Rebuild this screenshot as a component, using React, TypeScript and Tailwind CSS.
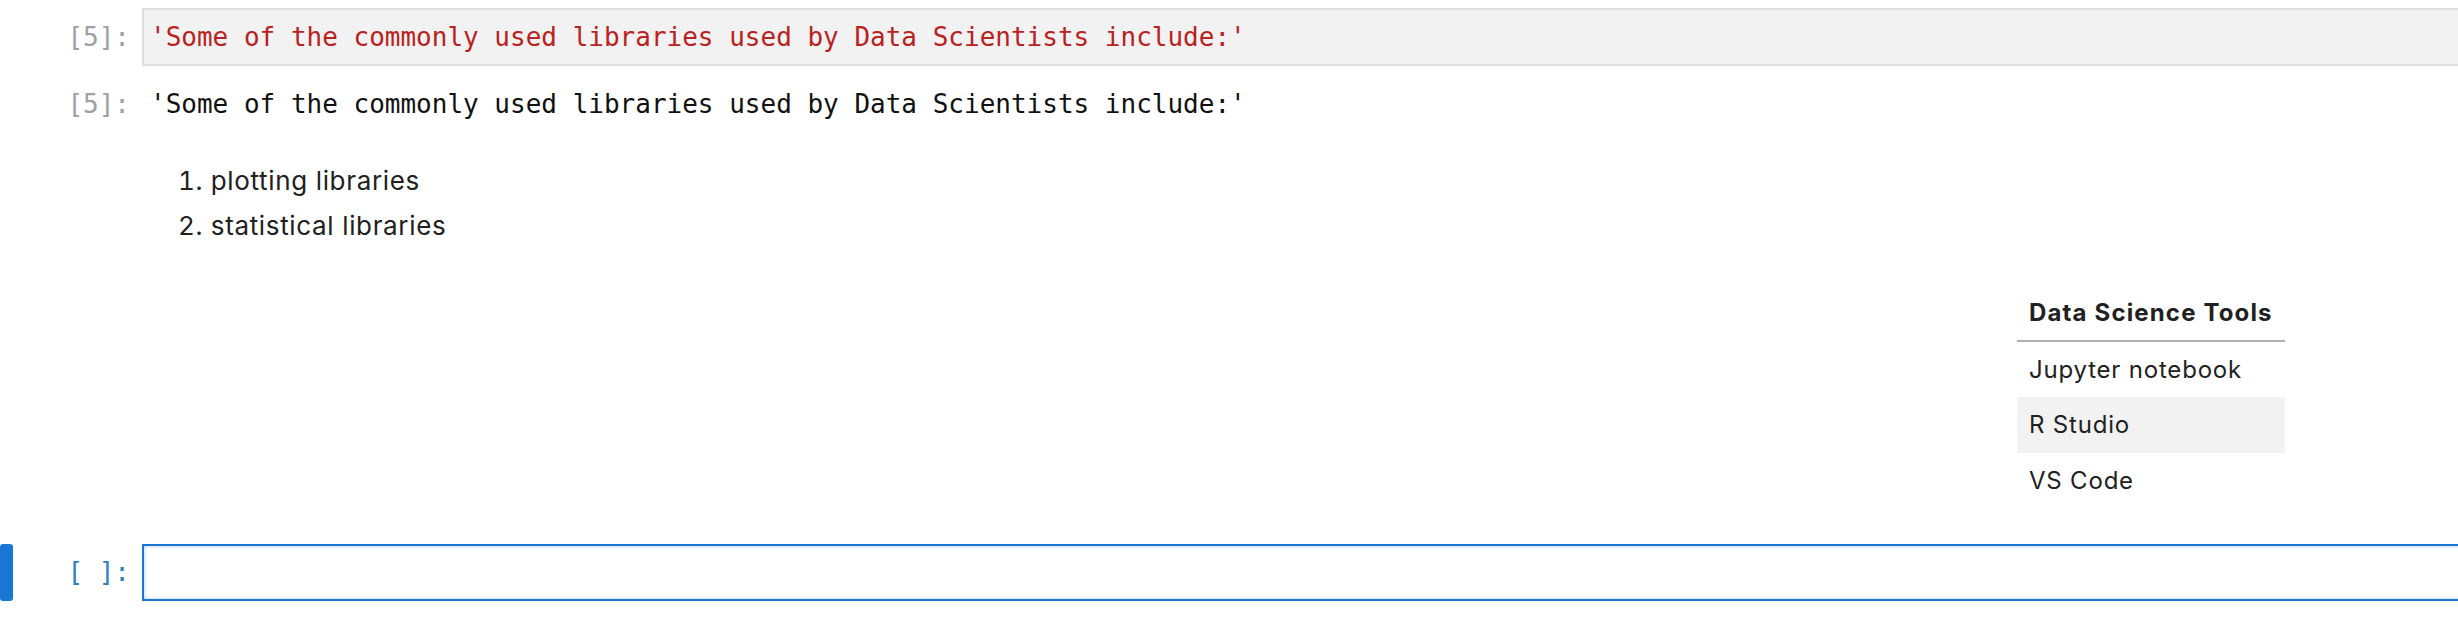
import React from "react";

const mono = "font-['DejaVu_Sans_Mono',monospace]";

export default function App() {
  return (
    <div className="w-[2458px] h-[642px] overflow-hidden bg-white text-[#212121]">
      {/* Code cell input */}
      <div className="flex items-start pt-[8px]">
        <div className={`${mono} w-[142px] shrink-0 pr-[12px] text-right text-[26px] leading-[58px] text-[#a0a0a0]`}>
          [5]:
        </div>
        <div className={`${mono} w-[2400px] shrink-0 border-2 border-[#dfdfdf] bg-[#f2f2f2] pl-[6px] text-[26px] leading-[54px] text-[#ba2121] whitespace-pre`}>
          'Some of the commonly used libraries used by Data Scientists include:'
        </div>
      </div>

      {/* Output */}
      <div className="flex items-start mt-[23px]">
        <div className={`${mono} w-[142px] shrink-0 pr-[12px] text-right text-[26px] leading-[30px] text-[#a0a0a0]`}>
          [5]:
        </div>
        <div className={`${mono} pl-[8px] text-[26px] leading-[30px] text-[#111] whitespace-pre`}>
          'Some of the commonly used libraries used by Data Scientists include:'
        </div>
      </div>

      {/* Markdown cell */}
      <div className="font-['Inter',sans-serif] mt-[39px]">
        <ol className="list-decimal list-inside pl-[178px] text-[26px] tracking-[0.65px] leading-[45px]">
          <li>plotting libraries</li>
          <li>statistical libraries</li>
        </ol>
        <div className="flex mt-[37px] pl-[2017px]">
          <table className="text-[24px] tracking-[0.8px] border-collapse">
            <thead>
              <tr className="h-[56px] border-b-2 border-[#b0b0b0]">
                <th className="px-[12px] text-left font-bold tracking-[1.15px]">Data Science Tools</th>
              </tr>
            </thead>
            <tbody>
              <tr className="h-[56px]">
                <td className="px-[12px]">Jupyter notebook</td>
              </tr>
              <tr className="h-[56px] bg-[#f2f2f2]">
                <td className="px-[12px]">R Studio</td>
              </tr>
              <tr className="h-[56px]">
                <td className="px-[12px]">VS Code</td>
              </tr>
            </tbody>
          </table>
        </div>
      </div>

      {/* Active empty input cell */}
      <div className="flex items-stretch mt-[35px]">
        <div className="w-[13px] h-[57px] shrink-0 rounded-[3px] bg-[#1976d2]" />
        <div className={`${mono} w-[129px] shrink-0 pr-[12px] text-right text-[26px] leading-[57px] text-[#307fc1] whitespace-pre`}>
          [ ]:
        </div>
        <div className="w-[2400px] h-[57px] shrink-0 border-2 border-[#1976d2] bg-white shadow-[inset_0_0_4px_rgba(25,118,210,0.35)]" />
      </div>
    </div>
  );
}
